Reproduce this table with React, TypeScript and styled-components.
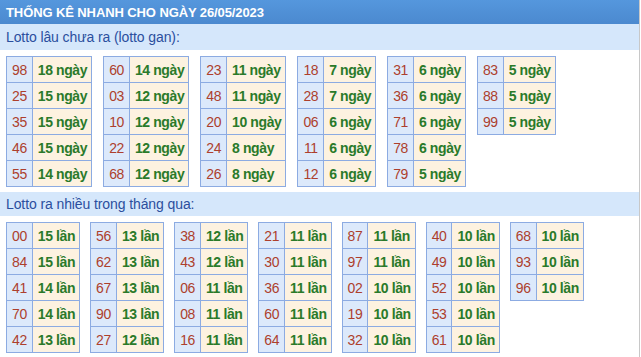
import styled, { createGlobalStyle } from "styled-components";

const GlobalStyle = createGlobalStyle`
  html, body {
    margin: 0;
    padding: 0;
    background: #ffffff;
  }
  body {
    font-family: "Liberation Sans", Arial, sans-serif;
  }
`;

const Page = styled.div`
  width: 640px;
  height: 357px;
  border-right: 1px solid #c8c8c8;
  box-sizing: border-box;
  overflow: hidden;
`;

const Header = styled.div`
  height: 24px;
  display: flex;
  align-items: center;
  padding: 0 6px;
  background: linear-gradient(#5597dd, #4b89cf);
  color: #ffffff;
  font-size: 13px;
  font-weight: 700;
  letter-spacing: -0.1px;
  width: 641px;
  box-sizing: border-box;
`;

const SubTitle = styled.div<{ $h: number }>`
  height: ${(p) => p.$h}px;
  display: flex;
  align-items: center;
  padding: 0 6px;
  background: #d5e7fb;
  color: #2b4f9e;
  font-size: 14px;
  letter-spacing: -0.1px;
`;

const Tables = styled.div<{ $gap: number }>`
  display: flex;
  align-items: flex-start;
  gap: ${(p) => p.$gap}px;
  padding: 6px 6px 5px;
`;

const Table = styled.table`
  border-collapse: collapse;
  border: 1px solid #8cabe2;
`;

const NumCell = styled.td`
  height: 25px;
  padding: 0 5px;
  border: 1px solid #8cabe2;
  background: #dce9fb;
  color: #ad3f2d;
  font-size: 14px;
  text-align: center;
  letter-spacing: -0.4px;
`;

const ValCell = styled.td`
  height: 25px;
  padding: 0 4px 0 5px;
  border: 1px solid #8cabe2;
  background: #fdf2e0;
  color: #2a7a2a;
  font-size: 14px;
  font-weight: 700;
  white-space: nowrap;
  letter-spacing: -0.4px;
`;

type Row = [string, string];

const gan: Row[][] = [
  [["98", "18"], ["25", "15"], ["35", "15"], ["46", "15"], ["55", "14"]],
  [["60", "14"], ["03", "12"], ["10", "12"], ["22", "12"], ["68", "12"]],
  [["23", "11"], ["48", "11"], ["20", "10"], ["24", "8"], ["26", "8"]],
  [["18", "7"], ["28", "7"], ["06", "6"], ["11", "6"], ["12", "6"]],
  [["31", "6"], ["36", "6"], ["71", "6"], ["78", "6"], ["79", "5"]],
  [["83", "5"], ["88", "5"], ["99", "5"]],
];

const nhieu: Row[][] = [
  [["00", "15"], ["84", "15"], ["41", "14"], ["70", "14"], ["42", "13"]],
  [["56", "13"], ["62", "13"], ["67", "13"], ["90", "13"], ["27", "12"]],
  [["38", "12"], ["43", "12"], ["06", "11"], ["08", "11"], ["16", "11"]],
  [["21", "11"], ["30", "11"], ["36", "11"], ["60", "11"], ["64", "11"]],
  [["87", "11"], ["97", "11"], ["02", "10"], ["19", "10"], ["32", "10"]],
  [["40", "10"], ["49", "10"], ["52", "10"], ["53", "10"], ["61", "10"]],
  [["68", "10"], ["93", "10"], ["96", "10"]],
];

const Group = ({ rows, unit }: { rows: Row[]; unit: string }) => (
  <Table>
    <tbody>
      {rows.map(([n, v]) => (
        <tr key={n}>
          <NumCell>{n}</NumCell>
          <ValCell>
            {v} {unit}
          </ValCell>
        </tr>
      ))}
    </tbody>
  </Table>
);

const App = () => {
  return (
    <Page>
      <GlobalStyle />
      <Header>THỐNG KÊ NHANH CHO NGÀY 26/05/2023</Header>
      <SubTitle $h={26}>Lotto lâu chưa ra (lotto gan):</SubTitle>
      <Tables $gap={11}>
        {gan.map((g, i) => (
          <Group key={i} rows={g} unit="ngày" />
        ))}
      </Tables>
      <SubTitle $h={24}>Lotto ra nhiều trong tháng qua:</SubTitle>
      <Tables $gap={10}>
        {nhieu.map((g, i) => (
          <Group key={i} rows={g} unit="lần" />
        ))}
      </Tables>
    </Page>
  );
};

export default App;
